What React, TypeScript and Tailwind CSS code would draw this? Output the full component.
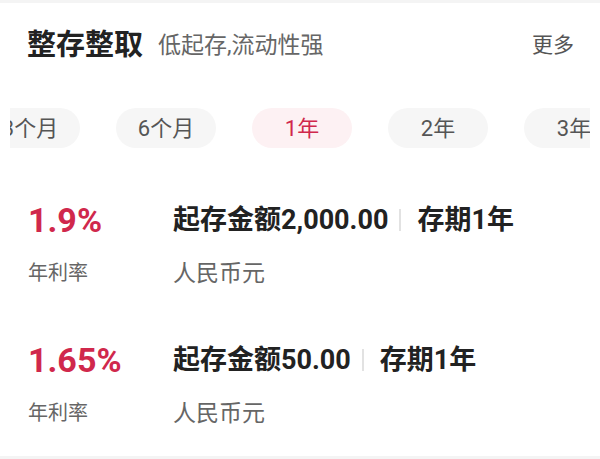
import React from "react";

const FONT = { fontFamily: 'Roboto, "Noto Sans CJK SC", sans-serif' };

const tabs = ["3个月", "6个月", "1年", "2年", "3年"];

const rows = [
  { rate: "1.9%", amount: "起存金额2,000.00", term: "存期1年" },
  { rate: "1.65%", amount: "起存金额50.00", term: "存期1年" },
];

export default function App() {
  return (
    <div className="w-[600px] h-[459px] bg-white overflow-hidden flex flex-col" style={FONT}>
      <div className="h-[3px] bg-[#f4f4f4]" />
      <div className="h-[84px] flex items-center justify-between pl-[27px] pr-[26px]">
        <div className="flex items-center">
          <span className="text-[29px] font-bold text-[#222] leading-none">整存整取</span>
          <span className="ml-[15px] text-[23px] text-[#666] leading-none">低起存,流动性强</span>
        </div>
        <span className="text-[21px] text-[#555] leading-none">更多</span>
      </div>
      <div className="mt-[21px] mx-[10px] overflow-hidden">
        <div className="flex gap-[36px] -ml-[30px]">
          {tabs.map((t) => {
            const active = t === "1年";
            return (
              <div
                key={t}
                className={
                  active
                    ? "shrink-0 w-[100px] h-[40px] rounded-full bg-[#fdf1f3] text-[#d0284c] text-[22px] flex items-center justify-center"
                    : "shrink-0 w-[100px] h-[40px] rounded-full bg-[#f6f6f6] text-[#555] text-[22px] flex items-center justify-center"
                }
              >
                {t}
              </div>
            );
          })}
        </div>
      </div>
      <div className="mt-[52px] flex flex-col gap-[53px] pl-[28px]">
        {rows.map((r) => (
          <div key={r.rate} className="flex">
            <div className="w-[145px] flex flex-col gap-[19px]">
              <div className="h-[40px] flex items-center text-[34px] font-bold text-[#d0284c] leading-none">
                {r.rate}
              </div>
              <div className="h-[28px] flex items-center text-[20px] text-[#666] leading-none">年利率</div>
            </div>
            <div className="flex flex-col gap-[19px]">
              <div className="h-[40px] flex items-center text-[27px] font-bold text-[#222] leading-none">
                <span>{r.amount}</span>
                <span className="ml-[11px] mr-[16px] w-[2px] h-[22px] bg-[#e2e2e2]" />
                <span>{r.term}</span>
              </div>
              <div className="h-[28px] flex items-center text-[23px] text-[#666] leading-none">人民币元</div>
            </div>
          </div>
        ))}
      </div>
      <div className="flex-1" />
      <div className="h-[3px] bg-[#f4f4f4]" />
    </div>
  );
}
